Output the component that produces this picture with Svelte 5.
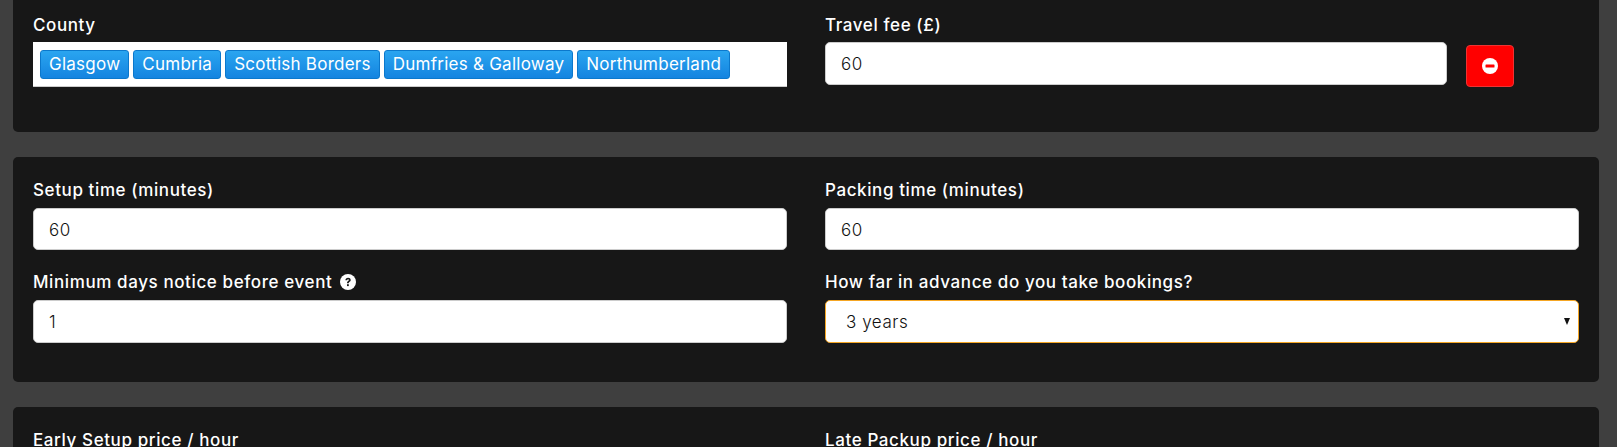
<script>
  let counties = ['Glasgow', 'Cumbria', 'Scottish Borders', 'Dumfries & Galloway', 'Northumberland'];
</script>

<div class="page">
  <section class="card first">
    <div class="row">
      <div class="field">
        <div class="label">County</div>
        <div class="tags">
          {#each counties as c}
            <span class="tag">{c}</span>
          {/each}
        </div>
      </div>
      <div class="field">
        <div class="label">Travel fee (£)</div>
        <div class="withbtn">
          <input value="60" readonly />
          <button class="remove" type="button" aria-label="Remove">
            <svg viewBox="0 0 16 16" width="16" height="16">
              <circle cx="8" cy="8" r="8" fill="#fff" />
              <rect x="3.5" y="6.5" width="9" height="3" rx="0.6" fill="#f00" />
            </svg>
          </button>
        </div>
      </div>
    </div>
  </section>

  <section class="card second">
    <div class="row">
      <div class="field">
        <div class="label">Setup time (minutes)</div>
        <input class="short" value="60" readonly />
      </div>
      <div class="field">
        <div class="label">Packing time (minutes)</div>
        <input class="short" value="60" readonly />
      </div>
      <div class="field">
        <div class="label">
          Minimum days notice before event
          <svg class="help" viewBox="0 0 16 16" width="16" height="16">
            <circle cx="8" cy="8" r="8" fill="#fff" />
            <path d="M5.4 6.2c0-1.5 1.1-2.4 2.7-2.4 1.5 0 2.6.9 2.6 2.2 0 1-.6 1.5-1.3 2-.5.3-.7.6-.7 1.2H7c0-1.1.3-1.6 1.1-2.2.5-.3.8-.6.8-1 0-.5-.3-.7-.8-.7-.6 0-.9.3-1 .9z" fill="#181818" />
            <rect x="7" y="10.2" width="1.8" height="1.9" fill="#181818" />
          </svg>
        </div>
        <input value="1" readonly />
      </div>
      <div class="field">
        <div class="label">How far in advance do you take bookings?</div>
        <div class="selectwrap">
          <select class="active">
            <option>3 years</option>
            <option>2 years</option>
            <option>1 year</option>
          </select>
        </div>
      </div>
    </div>
  </section>

  <section class="card">
    <div class="row">
      <div class="field">
        <div class="label">Early Setup price / hour</div>
        <input value="0" readonly />
      </div>
      <div class="field">
        <div class="label">Late Packup price / hour</div>
        <input value="0" readonly />
      </div>
    </div>
  </section>
</div>

<style>
  :global(body) {
    background: #3f3f3f;
    overflow: hidden;
    height: 447px;
  }
  .page {
    padding: 0 18px 0 13px;
    font-family: Inter, "Open Sans", sans-serif;
    font-size: 17px;
    letter-spacing: 0.6px;
    color: #fff;
  }
  .card {
    background: #171717;
    border-radius: 5px;
    padding: 21px 20px 39px;
    margin-bottom: 25px;
  }
  .card.first {
    border-radius: 0 0 5px 5px;
    padding-top: 13px;
    padding-bottom: 45px;
  }
  .row {
    display: grid;
    grid-template-columns: 754px 754px;
    column-gap: 38px;
    row-gap: 20px;
  }
  .label {
    line-height: 24px;
    margin-bottom: 6px;
    font-weight: 500;
  }
  .first .label {
    margin-bottom: 5px;
  }
  .help {
    vertical-align: -2px;
    margin-left: 3px;
  }
  input,
  select {
    display: block;
    box-sizing: border-box;
    width: 100%;
    height: 43px;
    padding: 0 15px;
    border: 1px solid #ccc;
    border-radius: 5px;
    background-color: #fff;
    font-family: inherit;
    font-size: 17px;
    letter-spacing: 0.55px;
    font-weight: 300;
    color: #111;
    outline: none;
  }
  input.short {
    height: 42px;
    padding-top: 1px;
  }
  select {
    appearance: none;
    padding: 0 20px;
  }
  select.active {
    border-color: #f5a623;
  }
  .selectwrap {
    position: relative;
  }
  .selectwrap::after {
    content: "";
    position: absolute;
    right: 9px;
    top: 18px;
    border-left: 3.5px solid transparent;
    border-right: 3.5px solid transparent;
    border-top: 7px solid #111;
    pointer-events: none;
  }
  .tags {
    box-sizing: border-box;
    height: 45px;
    background: #fff;
    border-bottom: 1px solid #ccc;
    padding: 8px 7px;
    display: flex;
    gap: 4px;
  }
  .tag {
    box-sizing: border-box;
    height: 29px;
    line-height: 27px;
    padding: 0 8px;
    border: 1px solid #0b78cc;
    border-radius: 3px;
    background: linear-gradient(#2aa5f0, #1484e0);
    color: #fff;
    font-weight: 400;
    letter-spacing: 0.25px;
    white-space: nowrap;
  }
  .withbtn {
    display: flex;
    gap: 19px;
    align-items: flex-start;
  }
  .withbtn input {
    width: 622px;
  }
  .remove {
    box-sizing: border-box;
    width: 48px;
    height: 42px;
    margin-top: 3px;
    padding: 0;
    border: 1px solid #e33;
    border-radius: 4px;
    background: #f00;
    display: flex;
    align-items: center;
    justify-content: center;
  }
</style>
